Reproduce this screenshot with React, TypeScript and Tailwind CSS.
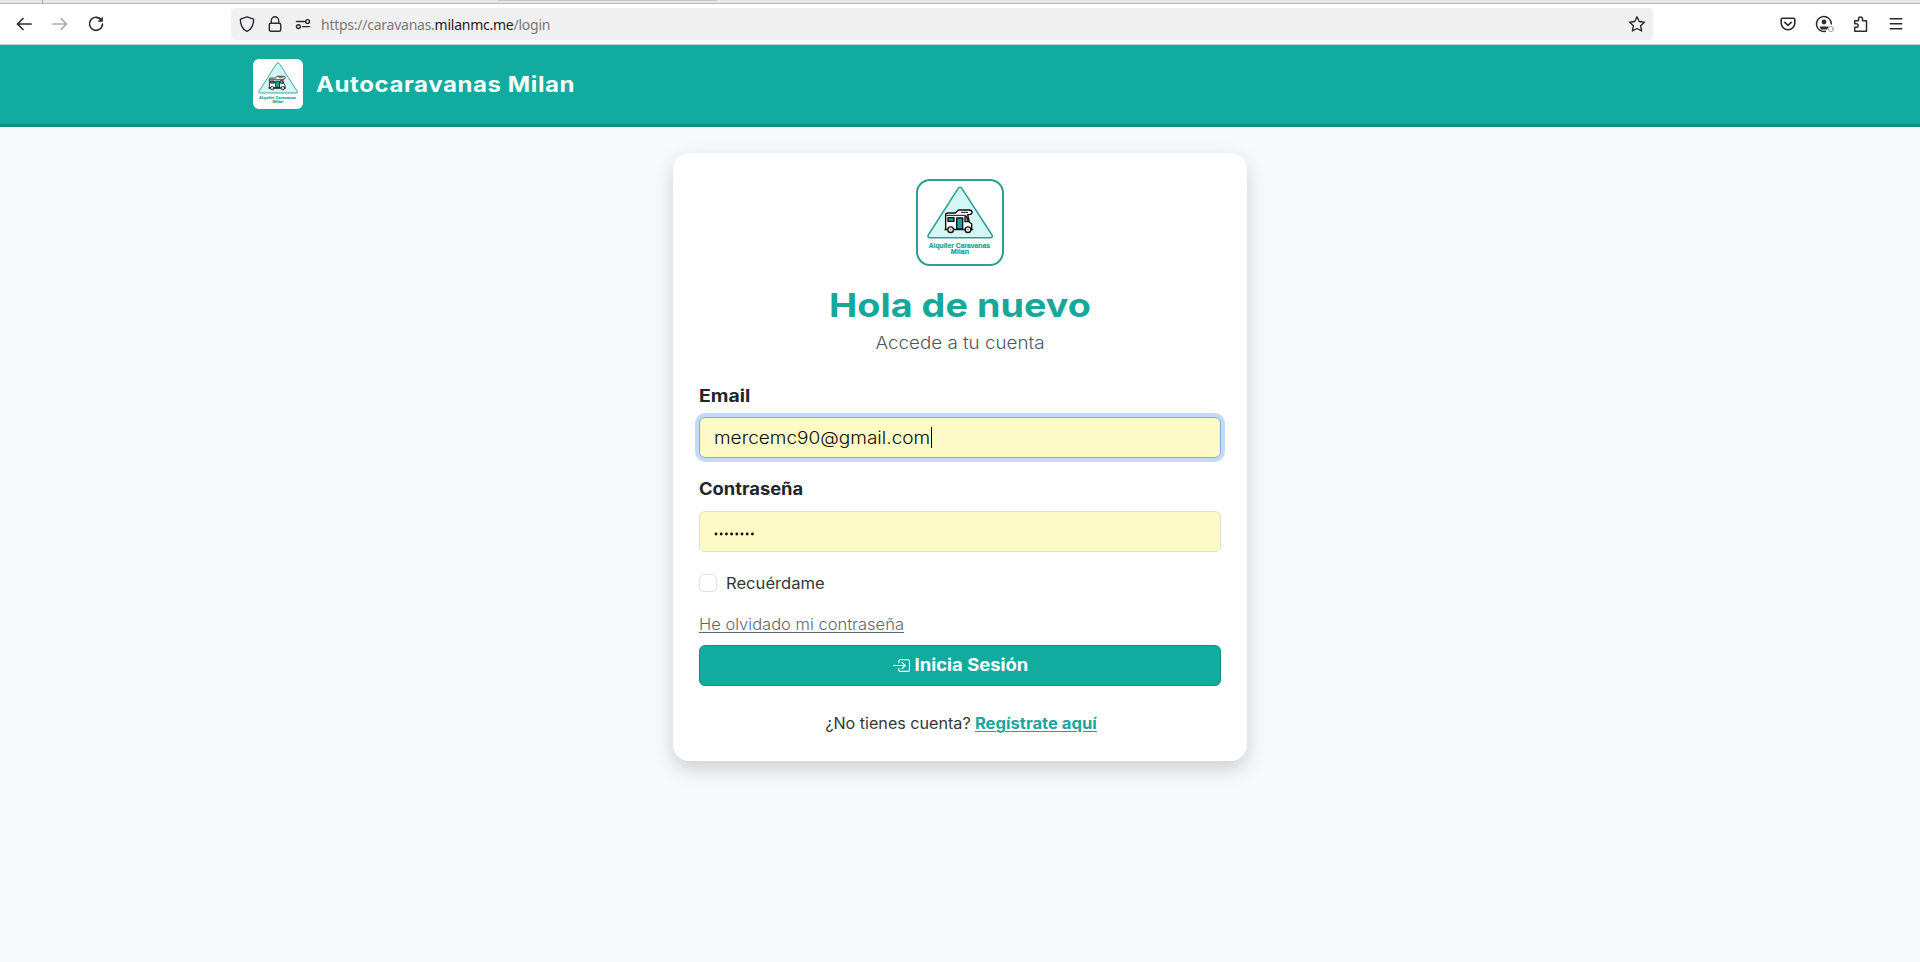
import React from 'react';

function Logo({ className, view }: { className: string; view: string }) {
  return (
    <svg className={className} viewBox={view}>
      <g transform="translate(-16 -14) scale(0.33333)">
        <path d="M174 71Q180 63 186 71L276 210Q280 218 271 218H90Q81 218 85 210Z" fill="#d3f7f4" stroke="#2c9d93" strokeWidth="4.5" strokeLinejoin="round" />
        <g stroke="#111" strokeWidth="4.2" strokeLinejoin="round" strokeLinecap="round">
          <path d="M137 193V150Q137 144 144 144H166L176 135H207Q216 135 216 142Q216 149 207 149H203L208 171L215 177V193H137Z" fill="#fff" />
          <path d="M140 151H198" fill="none" strokeWidth="3" />
          <path d="M184 142H203" fill="none" strokeWidth="3" />
          <path d="M144 158H162V169H144Z" fill="#16a59a" />
          <path d="M170 159H188V192H170Z" fill="#16a59a" />
          <path d="M195 155H200L205 170H195Z" fill="#8fd8d2" />
          <path d="M135 194H218" fill="none" />
          <circle cx="152" cy="194" r="8.5" fill="#fff" />
          <circle cx="204" cy="194" r="8.5" fill="#fff" />
        </g>
        <circle cx="152" cy="194" r="2.5" fill="#777" />
        <circle cx="204" cy="194" r="2.5" fill="#777" />
        <g className="font-['Liberation_Sans']" fill="#179f95" stroke="#179f95" strokeWidth="0.5" fontSize="21" fontWeight="700" textAnchor="middle">
          <text x="178" y="248" textLength="184" lengthAdjust="spacingAndGlyphs">Alquiler Caravanas</text>
          <text x="180" y="267" textLength="55" lengthAdjust="spacingAndGlyphs">Milan</text>
        </g>
      </g>
    </svg>
  );
}

const icon = 'h-4 w-4 shrink-0 overflow-visible fill-none stroke-[#2b2b30] [stroke-linecap:round] [stroke-linejoin:round]';

function BrowserBar() {
  return (
    <div>
      <div className="flex h-1 border-b border-[#b9b9b9] bg-[#e8e8e8]">
        <div className="w-[43px] border-r border-[#a8a8a8]" />
        <div className="ml-[455px] h-px w-[219px] bg-[#c9c9c9]" />
      </div>
      <div className="flex h-[41px] items-center border-b border-[#b5d5d2] bg-white pl-4">
        <svg className={icon} viewBox="0 0 16 16" strokeWidth="1.7"><path d="M15 8H1.5M7 2.5 1.5 8 7 13.5" /></svg>
        <svg className={`${icon} ml-5 opacity-40`} viewBox="0 0 16 16" strokeWidth="1.7"><path d="M1 8h13.5M9 2.5 14.5 8 9 13.5" /></svg>
        <svg className={`${icon} ml-5`} viewBox="0 0 16 16" strokeWidth="1.6">
          <path d="M13.4 4.2A6.5 6.5 0 1 0 14.5 8" />
          <path d="M14.6 1.2V5.4H10.4Z" fill="#2b2b30" strokeWidth="0.6" />
        </svg>
        <div className="ml-[127px] flex h-8 w-[1422px] items-center rounded-[4px] bg-[#f0f0f0] px-2">
          <svg className={icon} viewBox="0 0 16 16" strokeWidth="1.4"><path d="M8 .8 14.6 3.2C14.8 8.5 13 12.8 8 15.4 3 12.8 1.2 8.5 1.4 3.2Z" /></svg>
          <svg className={`${icon} ml-3`} viewBox="0 0 16 16" strokeWidth="1.4"><rect x="2.3" y="7.2" width="11.4" height="8" rx="1.5" /><path d="M4.3 7V4.5a3.7 3.7 0 0 1 7.4 0V7" /></svg>
          <svg className={`${icon} ml-3`} viewBox="0 0 16 16" strokeWidth="1.4"><path d="M1.5 5.5H9.5M7.5 10.6H14.5" /><circle cx="12.6" cy="5.5" r="1.9" /><circle cx="3.4" cy="10.6" r="1.9" /></svg>
          <div className="ml-[10px] grow whitespace-nowrap font-['Noto_Sans',sans-serif] text-[14px] tracking-[-0.25px] text-[#7a7a7a]">
            https://caravanas.<span className="text-[#1c1c1c]">milanmc.me</span>/login
          </div>
          <svg className={icon} viewBox="0 0 16 16" strokeWidth="1.4"><path d="M8 .8 10.2 5.5 15.4 6.2 11.6 9.8 12.6 15 8 12.5 3.4 15 4.4 9.8.6 6.2 5.8 5.5Z" /></svg>
        </div>
        <div className="ml-[127px] flex gap-5">
          <svg className={icon} viewBox="0 0 16 16" strokeWidth="1.6"><path d="M2.5 2.3h11a1.3 1.3 0 0 1 1.3 1.3V7a6.8 6.8 0 0 1-13.6 0V3.6a1.3 1.3 0 0 1 1.3-1.3ZM4.8 6.3 8 9.3l3.2-3" /></svg>
          <svg className={icon} viewBox="0 0 16 16" strokeWidth="1.5">
            <path d="M15.3 8A7.4 7.4 0 1 0 9.5 15.2" />
            <circle cx="8" cy="6" r="2.4" fill="#2b2b30" stroke="none" />
            <path d="M3.5 10.5h9L11 13.5H5Z" fill="#2b2b30" stroke="none" />
            <circle cx="14.8" cy="13" r="2.5" fill="#fff" stroke="#999" strokeWidth="1" />
          </svg>
          <svg className={icon} viewBox="0 0 16 16" strokeWidth="1.5"><path d="M2.7 15.2V11.3H4.5a1.7 1.7 0 0 0 0-3.5H2.7V4.8H6.5V3a2 2 0 0 1 4 0V4.8H14.5V15.2Z" /></svg>
          <svg className={icon} viewBox="0 0 16 16" strokeWidth="1.4"><path d="M2.2 2.8H13.8M2.2 7.8H13.8M2.2 12.8H13.8" /></svg>
        </div>
      </div>
    </div>
  );
}

export default function App() {
  return (
    <div className="flex h-[962px] flex-col overflow-hidden bg-[#f6fafd] font-['Inter',sans-serif] text-[#212529]">
      <BrowserBar />
      <header className="flex h-[82px] shrink-0 items-center border-b-[3px] border-[#108f84] bg-[#11ab9f] pl-[253px]">
        <div className="mb-[2px] h-[50px] w-[50px] rounded-md bg-white">
          <Logo className="h-[50px] w-[50px]" view="2.5 2.3 83 83" />
        </div>
        <div className="ml-[13px] origin-left scale-x-[1.145] whitespace-nowrap text-[21px] font-bold tracking-[0.5px] text-[#f6fffe]">Autocaravanas Milan</div>
      </header>
      <main className="flex justify-center pt-[26px]">
        <div className="flex h-[608px] w-[574px] flex-col rounded-2xl bg-white px-[26px] pt-[26px] shadow-[0_8px_20px_rgba(0,0,0,0.17)]">
          <div className="flex h-[87px] w-[88px] items-center justify-center self-center rounded-[14px] border-2 border-[#2c9d93]">
            <Logo className="h-[87px] w-[88px] shrink-0" view="0 0 88 87" />
          </div>
          <h1 className="mt-[18px] h-[41px] scale-x-[1.145] text-center text-[33px] leading-[42px] font-bold text-[#17a79b]">Hola de nuevo</h1>
          <p className="mt-[6px] h-6 scale-x-[1.105] text-center text-[17px] leading-6 font-light text-[#4f565d]">Accede a tu cuenta</p>
          <label className="mt-[29px] h-6 origin-left scale-x-[1.14] self-start text-[17px] leading-6 font-bold">Email</label>
          <div className="mt-[9px] flex h-[41px] shrink-0 items-center rounded-md border border-[#86a9d8] bg-[#fefac8] pl-[14px] shadow-[0_0_0_4px_#c2dbfa]">
            <span className="origin-left scale-x-[1.12] pt-[2px] text-[17px] font-light text-[#0c0c00]">mercemc90@gmail.com</span>
            <span className="ml-[24px] h-[21px] w-px bg-black" />
          </div>
          <label className="mt-[19px] h-6 origin-left scale-x-[1.08] self-start text-[17px] leading-6 font-bold">Contraseña</label>
          <div className="mt-[10px] flex h-[41px] shrink-0 items-center rounded-md border border-[#dedfcf] bg-[#fefac8] pt-[4px] pl-[14px]">
            <svg className="h-1 w-[42px]" viewBox="0 0 42 4" fill="#14140a">
              {Array.from({ length: 8 }, (_, i) => (
                <circle key={i} cx={2 + i * 5.2} cy="2" r="1.45" />
              ))}
            </svg>
          </div>
          <div className="mt-[19px] flex h-6 items-center">
            <span className="h-[18px] w-[18px] rounded-[5px] border border-[#dee2e6] bg-white" />
            <span className="ml-[8.5px] origin-left scale-x-[1.07] pt-px text-[15.5px] text-[#33373b]">Recuérdame</span>
          </div>
          <a className="mt-[18px] h-6 origin-left scale-x-[1.065] self-start text-[15.5px] leading-6 font-light text-[#5f6870] underline underline-offset-2">He olvidado mi contraseña</a>
          <button className="mt-[8px] flex h-[41px] shrink-0 items-center justify-center gap-[9px] rounded-md border border-[#188d83] bg-[#11ab9f] pr-[4px] text-white">
            <svg className="h-[17px] w-[17px] overflow-visible" viewBox="0 0 16 16" fill="currentColor">
              <path fillRule="evenodd" d="M6 3.5a.5.5 0 0 1 .5-.5h8a.5.5 0 0 1 .5.5v9a.5.5 0 0 1-.5.5h-8a.5.5 0 0 1-.5-.5v-2a.5.5 0 0 0-1 0v2A1.5 1.5 0 0 0 6.5 14h8a1.5 1.5 0 0 0 1.5-1.5v-9A1.5 1.5 0 0 0 14.5 2h-8A1.5 1.5 0 0 0 5 3.5v2a.5.5 0 0 0 1 0z" />
              <path fillRule="evenodd" d="M11.854 8.354a.5.5 0 0 0 0-.708l-3-3a.5.5 0 1 0-.708.708L10.293 7.5H.5a.5.5 0 0 0 0 1h9.793l-2.147 2.146a.5.5 0 0 0 .708.708z" />
            </svg>
            <span className="scale-x-[1.085] pt-px text-[17px] font-bold">Inicia Sesión</span>
          </button>
          <div className="mt-[26px] flex h-6 justify-center gap-[11px] text-[15.5px] leading-6">
            <span className="scale-x-[1.04] text-[#33373b]">¿No tienes cuenta?</span>
            <a className="scale-x-[1.072] font-bold text-[#17a79b] underline underline-offset-2">Regístrate aquí</a>
          </div>
        </div>
      </main>
    </div>
  );
}
